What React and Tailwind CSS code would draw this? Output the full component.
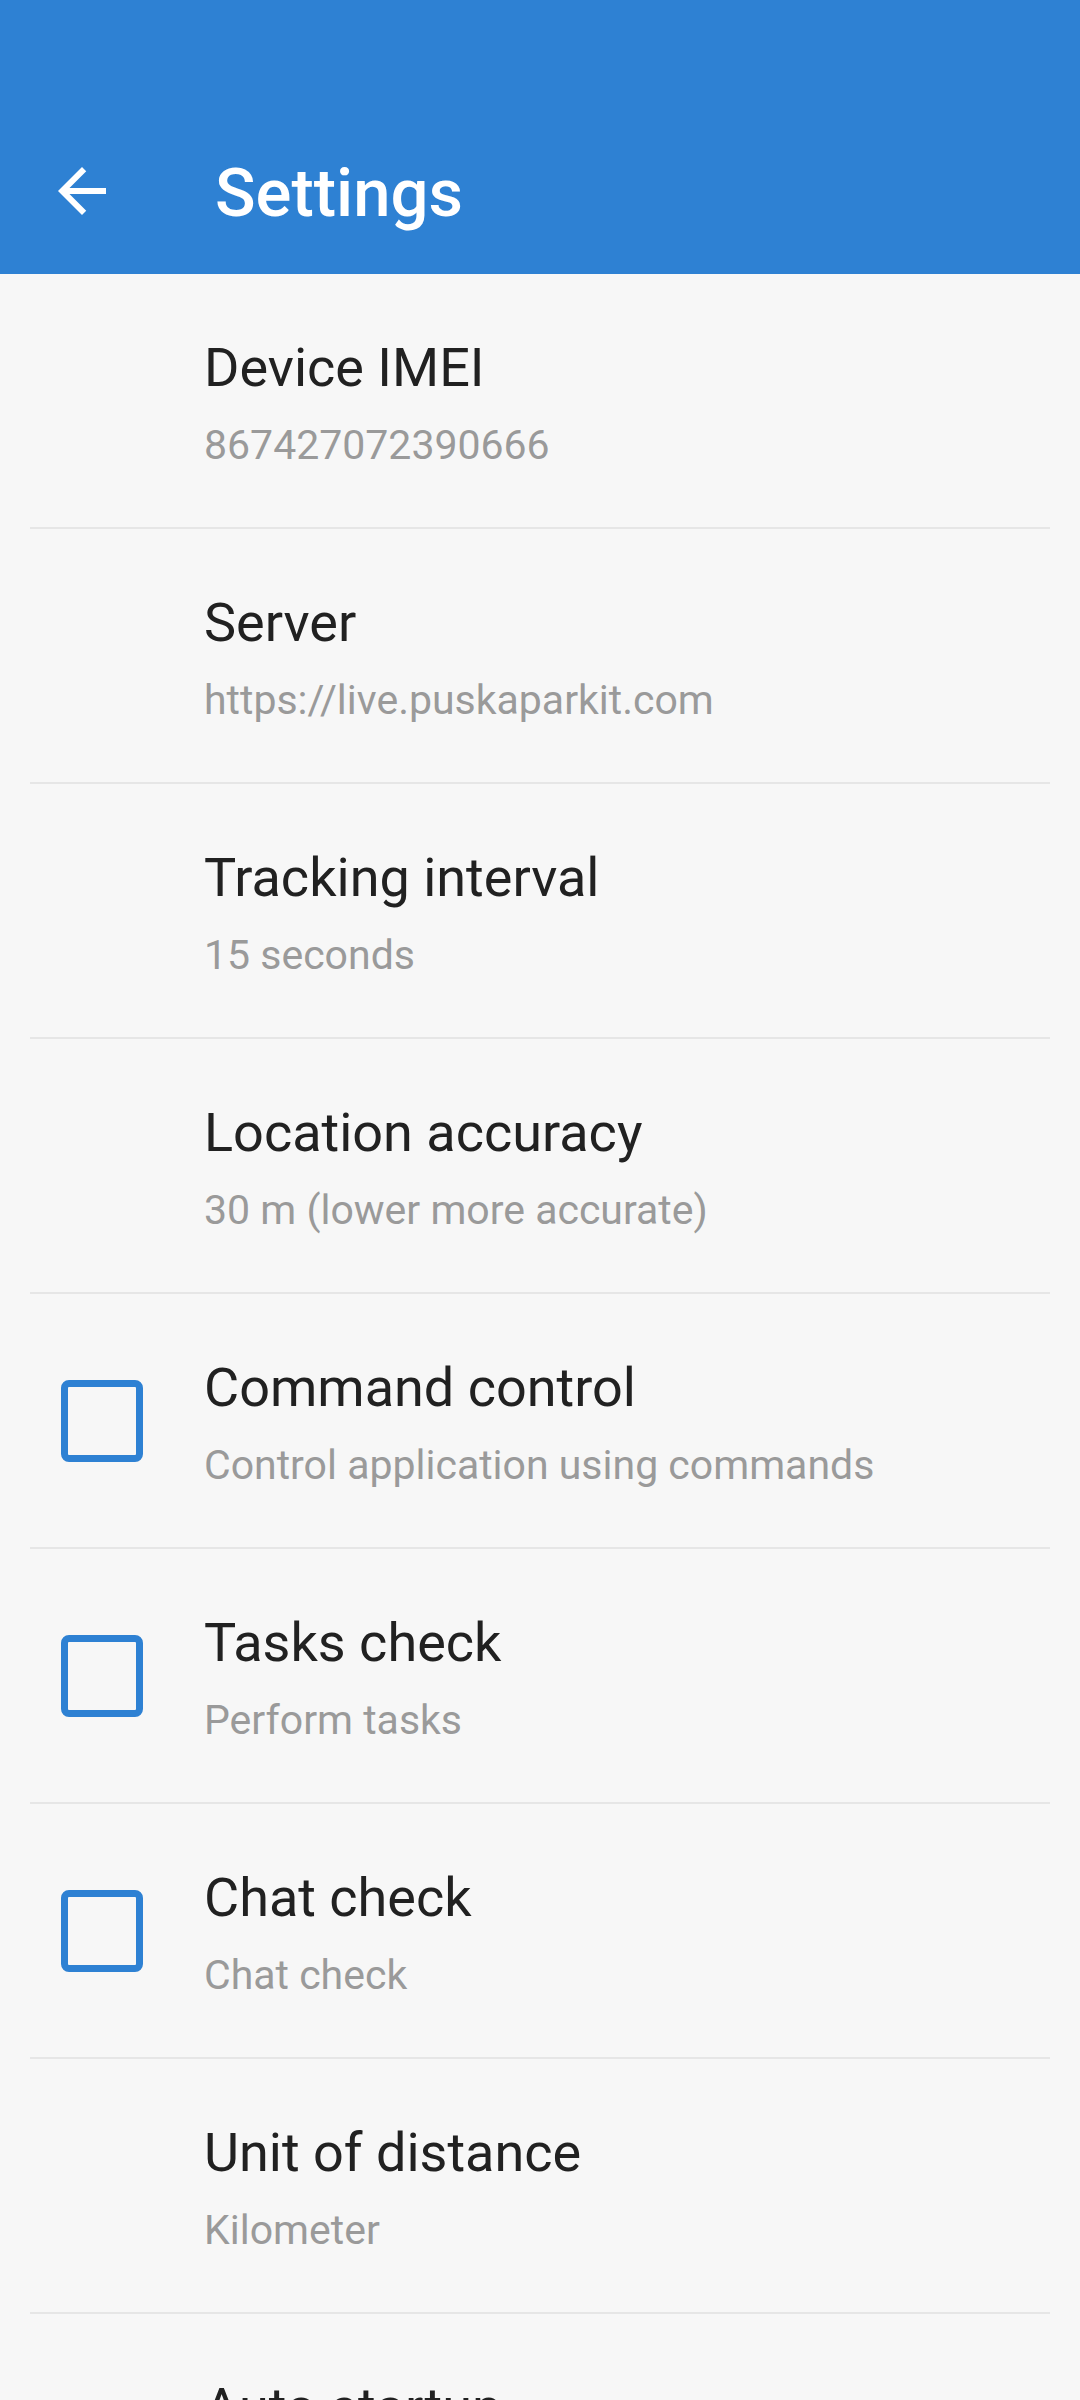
import React from "react";

const rows = [
  { title: "Device IMEI", sub: "867427072390666", check: false },
  { title: "Server", sub: "https://live.puskaparkit.com", check: false },
  { title: "Tracking interval", sub: "15 seconds", check: false },
  { title: "Location accuracy", sub: "30 m (lower more accurate)", check: false },
  { title: "Command control", sub: "Control application using commands", check: true },
  { title: "Tasks check", sub: "Perform tasks", check: true },
  { title: "Chat check", sub: "Chat check", check: true },
  { title: "Unit of distance", sub: "Kilometer", check: false },
  { title: "Auto startup", sub: "", check: true },
];

function Row({ title, sub, check, last }) {
  return (
    <div className="flex flex-col">
      <div className="flex h-[253px] shrink-0">
        <div className="w-[204px] shrink-0 flex items-center">
          {check && (
            <div className="ml-[61px] w-[82px] h-[82px] rounded-[8px] border-[7px] border-[#2e81d3]" />
          )}
        </div>
        <div className="flex flex-col pt-[62px]">
          <div className="text-[54px] leading-[64px] text-[#212121] whitespace-nowrap">{title}</div>
          {sub && (
            <div className="mt-[21px] text-[41px] leading-[48px] text-[#9a9a9a] whitespace-nowrap">{sub}</div>
          )}
        </div>
      </div>
      {!last && <div className="mx-[30px] h-[2px] bg-[#e6e6e6]" />}
    </div>
  );
}

export default function App() {
  return (
    <div
      className="w-[1080px] h-[2400px] bg-[#f7f7f7] overflow-hidden"
      style={{ fontFamily: "Roboto, 'Noto Sans', sans-serif" }}
    >
      <div className="h-[274px] bg-[#2e81d3] flex items-start pt-[155px] pl-[46px]">
        <svg width="72" height="72" viewBox="0 0 24 24" fill="#ffffff">
          <path d="M20 11H7.83l5.59-5.59L12 4l-8 8 8 8 1.41-1.41L7.83 13H20v-2z" />
        </svg>
        <div className="ml-[97px] mt-[2px] text-[67px] leading-[72px] font-medium text-white whitespace-nowrap">
          Settings
        </div>
      </div>
      {rows.map((r, i) => (
        <Row key={i} {...r} last={i === rows.length - 1} />
      ))}
    </div>
  );
}
